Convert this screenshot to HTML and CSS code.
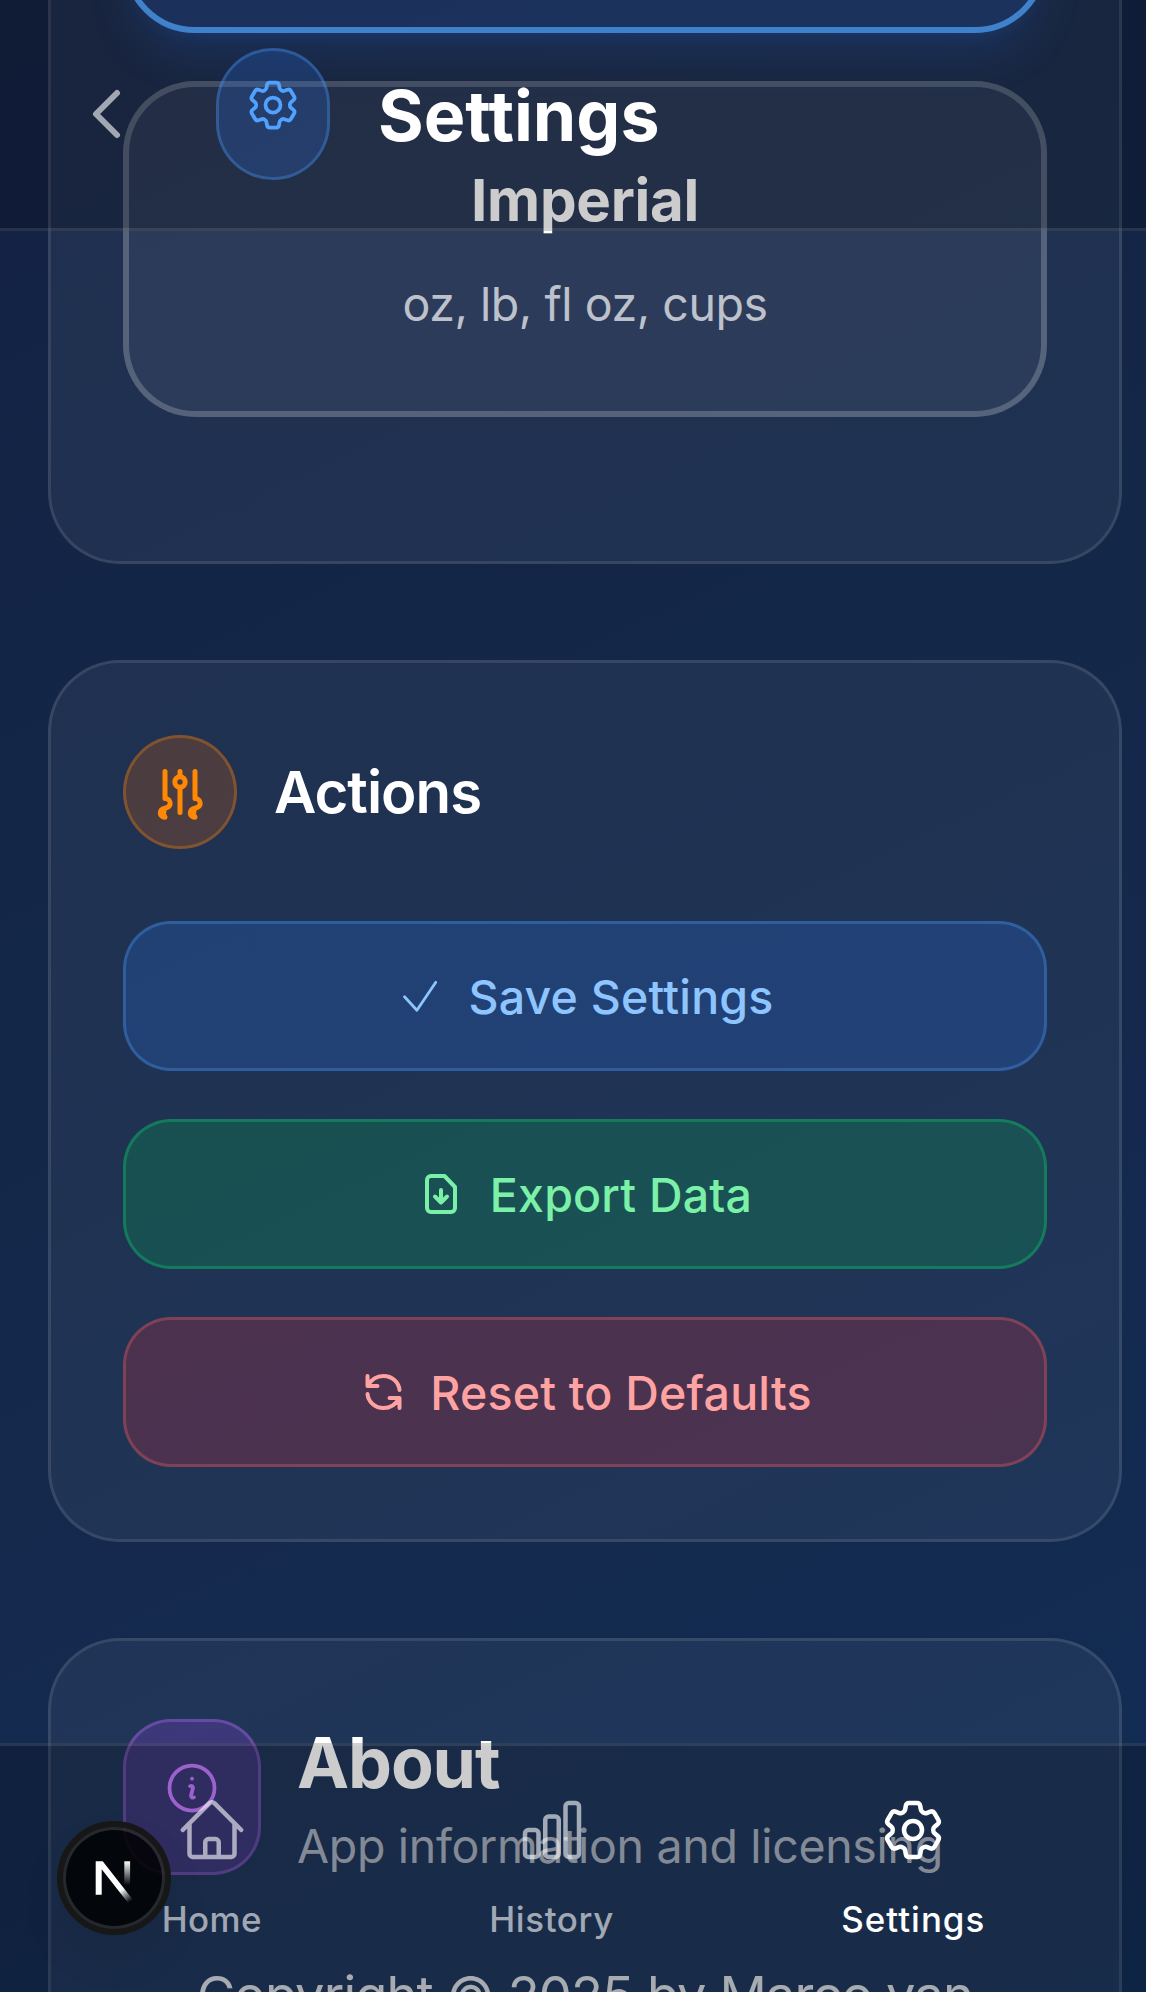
FILE: index.html
```html
<!DOCTYPE html>
<html lang="en">
<head>
  <meta charset="utf-8">
  <title>Settings</title>
  <link rel="stylesheet" href="styles.css">
</head>
<body>
  <svg class="sprite" aria-hidden="true">
    <symbol id="cog" viewBox="0 0 24 24">
      <path d="M9.594 3.94c.09-.542.56-.94 1.11-.94h2.593c.55 0 1.02.398 1.11.94l.213 1.281c.063.374.313.686.645.87.074.04.147.083.22.127.325.196.72.257 1.075.124l1.217-.456a1.125 1.125 0 0 1 1.37.49l1.296 2.247a1.125 1.125 0 0 1-.26 1.431l-1.003.827c-.293.241-.438.613-.43.992a7.723 7.723 0 0 1 0 .255c-.008.378.137.75.43.991l1.004.827c.424.35.534.955.26 1.43l-1.298 2.247a1.125 1.125 0 0 1-1.369.491l-1.217-.456c-.355-.133-.75-.072-1.076.124a6.47 6.47 0 0 1-.22.128c-.331.183-.581.495-.644.869l-.213 1.281c-.09.543-.56.94-1.11.94h-2.594c-.55 0-1.019-.398-1.11-.94l-.213-1.281c-.062-.374-.312-.686-.644-.87a6.52 6.52 0 0 1-.22-.127c-.325-.196-.72-.257-1.076-.124l-1.217.456a1.125 1.125 0 0 1-1.369-.49l-1.297-2.247a1.125 1.125 0 0 1 .26-1.431l1.004-.827c.292-.24.437-.613.43-.991a6.932 6.932 0 0 1 0-.255c.007-.38-.138-.751-.43-.992l-1.004-.827a1.125 1.125 0 0 1-.26-1.43l1.297-2.247a1.125 1.125 0 0 1 1.37-.491l1.216.456c.356.133.751.072 1.076-.124.072-.044.146-.086.22-.128.332-.183.582-.495.644-.869l.214-1.28Z"/>
      <path d="M15 12a3 3 0 1 1-6 0 3 3 0 0 1 6 0Z"/>
    </symbol>
  </svg>

  <div class="app">
    <main class="content">
      <section class="card units">
        <div class="option option-selected"></div>
        <div class="option">
          <h3 class="option-title">Imperial</h3>
          <p class="option-text">oz, lb, fl oz, cups</p>
        </div>
      </section>

      <section class="card actions">
        <div class="card-head">
          <span class="round-icon">
            <svg class="icon icon-md" viewBox="0 0 60 60" stroke-width="5">
              <path d="M30 9.5v41"/>
              <circle class="knob" cx="30" cy="20" r="5.2"/>
              <path d="M15 9.5V36.5c2.8 0 5.2 2 5.2 4.7s-2.4 4.300-5.200 5c-2.700.6-4.700 2.400-4.700 4.700 0 2.300 2 4.100 4.700 4.300M14 49.500l-.8 2.500 1.300 2"/>
              <path d="M45 9.500V36.500c2.800 0 5.200 2 5.200 4.700s-2.400 4.300-5.200 5c-2.700.6-4.700 2.400-4.700 4.700 0 2.300 2 4.100 4.700 4.300M44 49.500l-.8 2.500 1.300 2"/>
            </svg>
          </span>
          <h2 class="card-title">Actions</h2>
        </div>
        <div class="buttons">
          <button class="btn btn-blue">
            <svg class="icon icon-sm" viewBox="0 0 48 48" stroke-width="2.8"><path d="M8.500 24.700 20.900 38.200 39.800 10.300"/></svg>
            <span class="btn-label">Save Settings</span>
          </button>
          <button class="btn btn-green">
            <svg class="icon icon-sm" viewBox="0 0 48 48" stroke-width="4">
              <path d="M13 6h13.500L37 17v21a4 4 0 0 1-4 4H13a4 4 0 0 1-4-4V10a4 4 0 0 1 4-4ZM23 20v12.500M17 26.500l6 6 6-6"/>
            </svg>
            <span class="btn-label">Export Data</span>
          </button>
          <button class="btn btn-red">
            <svg class="icon icon-sm" viewBox="0 0 48 48" stroke-width="4">
              <path d="M9.500 8v10h10M41.500 22C40.700 14 34 8 25.500 8 18.500 8 13 12 10 17.500M41.500 40V30H31.500M9.500 26c.8 8 7.500 14 16 14 7 0 12.500-4 15.500-9.500"/>
            </svg>
            <span class="btn-label">Reset to Defaults</span>
          </button>
        </div>
      </section>

      <section class="card about">
        <div class="card-head about-head">
          <span class="tile-icon">
            <svg class="icon icon-md" viewBox="0 0 24 24" stroke-width="1.5"><path d="m11.25 11.25.041-.02a.75.75 0 0 1 1.063.852l-.708 2.836a.75.75 0 0 0 1.063.853l.041-.021M21 12a9 9 0 1 1-18 0 9 9 0 0 1 18 0Zm-9-3.750h.008v.008H12V8.250Z"/></svg>
          </span>
          <div>
            <h2 class="about-title">About</h2>
            <p class="about-text">App information and licensing</p>
          </div>
        </div>
        <p class="copyright">Copyright © 2025 by Marco van</p>
      </section>
    </main>

    <header class="topbar">
      <button class="back" aria-label="Back">
        <svg class="icon icon-lg" viewBox="0 0 24 24" stroke-width="2"><path d="M15 19l-7-7 7-7"/></svg>
      </button>
      <span class="pill-icon"><svg class="icon icon-md" stroke-width="1.5"><use href="#cog"/></svg></span>
      <h1 class="topbar-title">Settings</h1>
    </header>

    <nav class="tabs">
      <a class="tab">
        <svg class="icon icon-lg" viewBox="0 0 24 24" stroke-width="1.5"><path d="m2.250 12 8.954-8.955c.44-.439 1.152-.439 1.591 0L21.750 12M4.500 9.750v10.125c0 .621.504 1.125 1.125 1.125H9.750v-4.875c0-.621.504-1.125 1.125-1.125h2.250c.621 0 1.125.504 1.125 1.125V21h4.125c.621 0 1.125-.504 1.125-1.125V9.750M8.250 21h8.250"/></svg>
        <span class="tab-home">Home</span>
      </a>
      <a class="tab">
        <svg class="icon icon-lg" viewBox="0 0 24 24" stroke-width="1.5"><path d="M3 13.125C3 12.504 3.504 12 4.125 12h2.250c.621 0 1.125.504 1.125 1.125v6.750C7.500 20.496 6.996 21 6.375 21h-2.250A1.125 1.125 0 0 1 3 19.875v-6.750ZM9.750 8.625c0-.621.504-1.125 1.125-1.125h2.250c.621 0 1.125.504 1.125 1.125v11.250c0 .621-.504 1.125-1.125 1.125h-2.250a1.125 1.125 0 0 1-1.125-1.125V8.625ZM16.500 4.125c0-.621.504-1.125 1.125-1.125h2.250C20.496 3 21 3.504 21 4.125v15.750c0 .621-.504 1.125-1.125 1.125h-2.250a1.125 1.125 0 0 1-1.125-1.125V4.125Z"/></svg>
        <span class="tab-history">History</span>
      </a>
      <a class="tab tab-active">
        <svg class="icon icon-lg" stroke-width="1.5"><use href="#cog"/></svg>
        <span class="tab-settings">Settings</span>
      </a>
    </nav>

    <div class="dev-badge">
      <svg width="60" height="60" viewBox="0 0 60 60">
        <defs>
          <linearGradient id="fade-leg" gradientUnits="userSpaceOnUse" x1="38" y1="41" x2="47" y2="53">
            <stop offset="0" stop-color="#fff"/><stop offset="1" stop-color="#fff" stop-opacity="0"/>
          </linearGradient>
          <linearGradient id="fade-stem" x1="0" y1="0" x2="0" y2="1">
            <stop offset="0" stop-color="#fff"/><stop offset="1" stop-color="#fff" stop-opacity="0"/>
          </linearGradient>
        </defs>
        <path d="M11.700 13.300h7L49.500 52.500l-4.600 3.500L17.700 21.300v25.400h-6Z" fill="url(#fade-leg)"/>
        <rect x="40.300" y="13.300" width="5.800" height="24" fill="url(#fade-stem)"/>
      </svg>
    </div>
  </div>
</body>
</html>
```
FILE: styles.css
```css
* {
  box-sizing: border-box;
}

body,
h1,
h2,
h3,
p {
  margin: 0;
}

body {
  background: #fff;
  color: #fff;
  font-family: Inter, "Liberation Sans", sans-serif;
}

button {
  border: 0;
  background: none;
  font: inherit;
}

.sprite {
  display: none;
}

.app {
  position: relative;
  width: 1146px;
  height: 1992px;
  overflow: hidden;
  background: linear-gradient(155deg, #142244 0%, #132748 40%, #14294d 65%, #122d55 100%);
}

.icon {
  display: block;
  flex: none;
  fill: none;
  stroke: currentColor;
  stroke-linecap: round;
  stroke-linejoin: round;
}

.icon-sm { width: 48px; height: 48px; }
.icon-md { width: 60px; height: 60px; }
.icon-lg { width: 72px; height: 72px; }

/* The list is scrolled: the first card starts above the window. */
.content {
  display: flex;
  flex-direction: column;
  gap: 96px;
  margin-top: -378px;
  padding: 0 24px 0 48px;
}

.card {
  padding: 72px;
  border: 3px solid rgba(255, 255, 255, 0.1);
  border-radius: 72px;
  background: rgba(255, 255, 255, 0.055);
}

.units {
  display: flex;
  flex-direction: column;
  gap: 48px;
  padding-bottom: 144px;
}

.option {
  display: flex;
  flex-direction: column;
  align-items: center;
  gap: 26px;
  height: 336px;
  padding: 71px 72px;
  border: 6px solid rgba(255, 255, 255, 0.2);
  border-radius: 72px;
  background: rgba(255, 255, 255, 0.055);
}

.option-selected {
  border-color: #51a2ff;
  background: rgba(43, 127, 255, 0.2);
  box-shadow: 0 30px 45px -9px rgba(43, 127, 255, 0.2), 0 12px 18px -12px rgba(43, 127, 255, 0.2);
}

.option-title {
  font-size: 58.2px;
  font-weight: 700;
  line-height: 84px;
  letter-spacing: -0.28px;
}

.option-text {
  color: rgba(255, 255, 255, 0.7);
  font-size: 46.5px;
  line-height: 72px;
  letter-spacing: -0.44px;
}

.card-head {
  display: flex;
  align-items: center;
  gap: 36px;
}

.round-icon {
  display: grid;
  place-items: center;
  width: 114px;
  height: 114px;
  border: 3px solid rgba(255, 137, 4, 0.3);
  border-radius: 50%;
  background: rgba(255, 105, 0, 0.2);
  color: #ff8904;
}

.knob {
  fill: #4d3c41;
}

.card-title {
  padding-left: 1px;
  font-size: 58.2px;
  font-weight: 600;
  line-height: 84px;
  letter-spacing: -1px;
}

.buttons {
  display: flex;
  flex-direction: column;
  gap: 48px;
  margin-top: 72px;
}

.btn {
  display: flex;
  align-items: center;
  justify-content: center;
  gap: 24px;
  height: 150px;
  border: 3px solid;
  border-radius: 48px;
  font-size: 46.5px;
  font-weight: 500;
  letter-spacing: 0.2px;
}

.btn-label {
  padding-top: 2px;
  line-height: 72px;
}

.btn-blue {
  border-color: rgba(81, 162, 255, 0.3);
  background: rgba(43, 127, 255, 0.2);
  color: #8ec5ff;
}

.btn-green {
  border-color: rgba(5, 223, 114, 0.3);
  background: rgba(0, 201, 81, 0.2);
  color: #7bf1a8;
}

.btn-red {
  border-color: rgba(255, 100, 103, 0.3);
  background: rgba(251, 44, 54, 0.2);
  color: #ffa2a2;
}

.tile-icon {
  display: flex;
  justify-content: center;
  width: 138px;
  height: 156px;
  padding-top: 36px;
  border: 3px solid rgba(194, 122, 255, 0.3);
  border-radius: 48px;
  background: rgba(173, 70, 255, 0.2);
  color: #c27aff;
}

.about-title {
  font-size: 69.8px;
  font-weight: 700;
  line-height: 99px;
  letter-spacing: -1.1px;
}

.about-text {
  color: rgba(255, 255, 255, 0.6);
  font-size: 46.5px;
  line-height: 69px;
  letter-spacing: -0.32px;
}

.copyright {
  margin-top: 72px;
  color: rgba(255, 255, 255, 0.8);
  font-size: 52.4px;
  line-height: 84px;
  letter-spacing: -0.86px;
  text-align: center;
  white-space: nowrap;
}

/* Translucent bars over the scrolled content */
.topbar {
  position: absolute;
  inset: 0 0 auto;
  display: flex;
  align-items: center;
  gap: 48px;
  height: 231px;
  padding: 0 48px;
  border-bottom: 3px solid rgba(255, 255, 255, 0.1);
  background: rgba(0, 0, 0, 0.2);
}

.back {
  padding: 0 24px;
  color: rgba(255, 255, 255, 0.6);
}

.pill-icon {
  display: flex;
  justify-content: center;
  width: 114px;
  height: 132px;
  padding-top: 24px;
  border: 3px solid rgba(81, 162, 255, 0.3);
  border-radius: 57px;
  background: rgba(43, 127, 255, 0.2);
  color: #51a2ff;
}

.topbar-title {
  padding-top: 3px;
  font-size: 69.8px;
  font-weight: 700;
  line-height: 96px;
}

.tabs {
  position: absolute;
  inset: auto 0 0;
  display: flex;
  justify-content: space-around;
  height: 249px;
  padding: 48px 47px 0 48px;
  border-top: 3px solid rgba(255, 255, 255, 0.1);
  background: rgba(0, 0, 0, 0.2);
}

.tab {
  display: flex;
  flex-direction: column;
  align-items: center;
  gap: 26px;
  color: rgba(255, 255, 255, 0.6);
  font-size: 34.9px;
  font-weight: 500;
  line-height: 54px;
}

.tab-active {
  color: #fff;
}

.tab-home { letter-spacing: 0.42px; }
.tab-history { letter-spacing: 0.63px; }
.tab-settings { letter-spacing: 1px; }

.dev-badge {
  position: absolute;
  left: 57px;
  bottom: 57px;
  display: grid;
  place-items: center;
  width: 114px;
  height: 114px;
  border: 6px solid #171717;
  border-radius: 50%;
  background: rgba(0, 0, 0, 0.85);
  background-clip: padding-box;
  box-shadow: inset 0 0 0 3px rgba(255, 255, 255, 0.14), 0 24px 48px rgba(0, 0, 0, 0.06);
}

.dev-badge svg {
  display: block;
}
```
